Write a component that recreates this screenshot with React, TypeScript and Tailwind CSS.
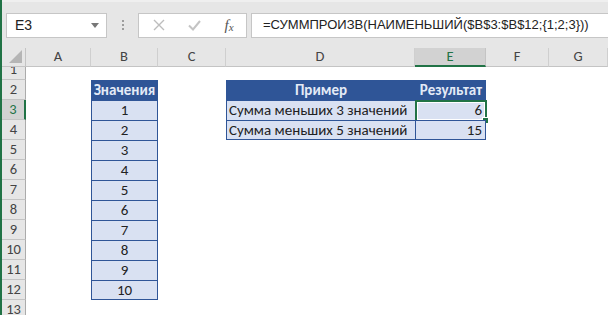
import React from "react";

const COLS = ["A", "B", "C", "D", "E", "F", "G"];
const ROWS = [1, 2, 3, 4, 5, 6, 7, 8, 9, 10, 11, 12, 13];
const VALUES = [1, 2, 3, 4, 5, 6, 7, 8, 9, 10];

const cellFont = "font-['Carlito','Calibri','Liberation_Sans',sans-serif]";
const uiFont = "font-['Segoe_UI','Liberation_Sans',sans-serif]";

function RowHeader({ n }: { n: number }) {
  const active = n === 3;
  return (
    <div
      className={`flex items-end justify-center overflow-hidden border-b border-[#c4c4c4] pb-[1px] text-[14.5px] leading-[18px] ${
        active
          ? "border-r-2 border-r-[#217346] bg-[#d2d2d2] text-[#217346]"
          : "border-r border-r-[#ababab] bg-[#e6e6e6] text-[#444]"
      }`}
    >
      {n}
    </div>
  );
}

function ColHeader({ c }: { c: string }) {
  const active = c === "E";
  return (
    <div
      className={`flex items-center justify-center text-[14.5px] ${
        active
          ? "border-b-2 border-b-[#217346] border-r border-r-[#c4c4c4] bg-[#d2d2d2] text-[#217346]"
          : "border-b border-b-[#c4c4c4] border-r border-r-[#cfcfcf] bg-[#e6e6e6] text-[#444]"
      }`}
    >
      {c}
    </div>
  );
}

function Toolbar() {
  return (
    <div className={`flex h-[48px] items-center border-t-2 border-[#efefef] bg-[#e6e6e6] ${uiFont}`}>
      <div className="ml-[4px] flex h-[25px] w-[101px] items-center justify-between border border-[#c6c6c6] bg-white pl-[8px] pr-[7px] text-[14px] text-[#222]">
        <span>E3</span>
        <svg width="8" height="5" viewBox="0 0 8 5">
          <path d="M0 0h8L4 5z" fill="#777" />
        </svg>
      </div>
      <div className="flex w-[31px] flex-col items-center gap-[2px]">
        <div className="h-[2px] w-[2px] bg-[#9d9d9d]" />
        <div className="h-[2px] w-[2px] bg-[#9d9d9d]" />
        <div className="h-[2px] w-[2px] bg-[#9d9d9d]" />
      </div>
      <div className="flex h-[25px] w-[109px] items-center border border-[#c6c6c6] bg-white">
        <div className="flex w-[37px] justify-center pl-[2px]">
          <svg width="12" height="12" viewBox="0 0 12 12">
            <path d="M1 1l10 10M11 1L1 11" stroke="#bdbdbd" strokeWidth="1.4" />
          </svg>
        </div>
        <div className="flex w-[36px] justify-center">
          <svg width="13" height="11" viewBox="0 0 13 11">
            <path d="M1 5.5l4 4L12 1" stroke="#c4c4c4" strokeWidth="2" fill="none" />
          </svg>
        </div>
        <div className="flex w-[34px] justify-center font-['Liberation_Serif',serif] text-[15px] italic text-[#555]">
          f<span className="mb-[3px] self-end text-[11px] leading-none">x</span>
        </div>
      </div>
      <div className="-mr-[2px] ml-[4px] flex h-[25px] flex-1 items-center overflow-hidden whitespace-nowrap border border-[#c6c6c6] bg-white pl-[11px] text-[13px] text-[#222]">
        =СУММПРОИЗВ(НАИМЕНЬШИЙ($B$3:$B$12;&#123;1;2;3&#125;))
      </div>
    </div>
  );
}

function Corner() {
  return (
    <div className="flex items-end justify-end border-b border-r border-[#c4c4c4] bg-[#e6e6e6] pb-[3px] pr-[3px]">
      <svg width="13" height="13" viewBox="0 0 13 13">
        <path d="M13 0V13H0z" fill="#b5b5b5" />
      </svg>
    </div>
  );
}

export default function App() {
  const blue = "border-[#2f5597]";
  return (
    <div className="h-[315px] w-[608px] overflow-hidden border-l-2 border-[#217346] bg-white">
      <Toolbar />
      <div
        className={`grid grid-cols-[24px_65px_67px_68px_189px_71px_63px_1fr] grid-rows-[19px_13px_repeat(12,20px)] ${cellFont}`}
      >
        <Corner />
        {COLS.map((c) => (
          <ColHeader key={c} c={c} />
        ))}
        {ROWS.map((n) => {
          const bIdx = n - 3;
          return (
            <React.Fragment key={n}>
              <RowHeader n={n} />
              <div />
              {/* column B */}
              {n === 2 ? (
                <div className={`flex items-center justify-center border border-b-0 ${blue} bg-[#2f5597] text-[15px] font-bold text-[#e3eaf6]`}>
                  Значения
                </div>
              ) : bIdx >= 0 && bIdx < VALUES.length ? (
                <div
                  className={`flex items-center justify-center border-x border-t ${blue} ${
                    n === 12 ? "border-b" : ""
                  } bg-[#d9e1f2] text-[15px] text-[#222]`}
                >
                  {VALUES[bIdx]}
                </div>
              ) : (
                <div />
              )}
              <div />
              {/* columns D, E */}
              {n === 2 ? (
                <>
                  <div className={`flex items-center justify-center border-l border-t ${blue} bg-[#2f5597] text-[15px] font-bold text-[#e3eaf6]`}>
                    Пример
                  </div>
                  <div className={`flex items-center justify-end border-x border-t ${blue} bg-[#2f5597] pr-[3px] text-[15px] font-bold text-[#e3eaf6]`}>
                    Результат
                  </div>
                </>
              ) : n === 3 || n === 4 ? (
                <>
                  <div
                    className={`flex items-center border-l border-t ${blue} ${
                      n === 4 ? "border-b" : ""
                    } bg-[#d9e1f2] pl-[2px] text-[15px] text-[#222]`}
                  >
                    {n === 3 ? "Сумма меньших 3 значений" : "Сумма меньших 5 значений"}
                  </div>
                  <div
                    className={`relative flex items-center justify-end border-x border-t ${blue} ${
                      n === 4 ? "border-b" : ""
                    } bg-[#d9e1f2] pr-[3px] text-[15px] text-[#222]`}
                  >
                    {n === 3 ? "6" : "15"}
                    {n === 3 && (
                      <>
                        <div className="absolute -left-[1px] -top-[1px] h-[22px] w-[72px] border-2 border-[#217346]">
                          <div className="h-full w-full border border-white" />
                        </div>
                        <div className="absolute -bottom-[4px] -right-[4px] h-[7px] w-[7px] border border-white bg-[#217346]" />
                      </>
                    )}
                  </div>
                </>
              ) : (
                <>
                  <div />
                  <div />
                </>
              )}
              <div />
              <div />
            </React.Fragment>
          );
        })}
      </div>
    </div>
  );
}
